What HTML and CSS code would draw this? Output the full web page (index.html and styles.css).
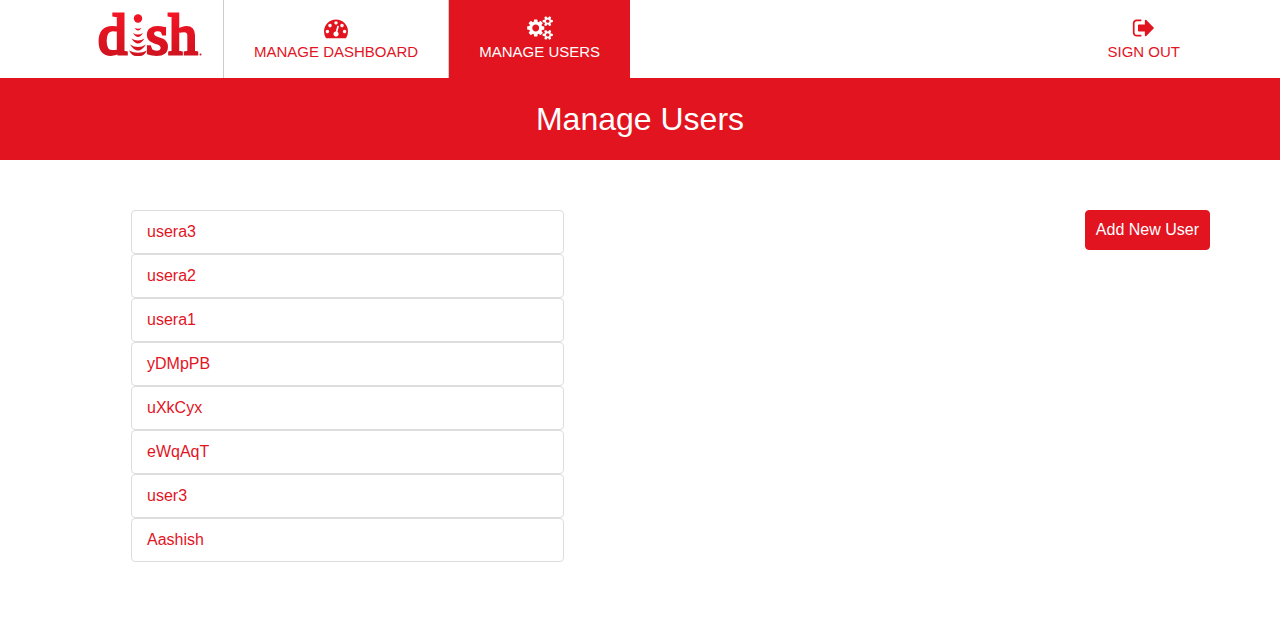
FILE: index.html
```html
<!DOCTYPE html>
<html lang="en">
<head>
<meta charset="utf-8">
<title>Manage Users</title>
<link rel="stylesheet" href="styles.css">
</head>
<body>
<header class="topbar">
  <a class="logo" href="#" aria-label="dish home">
    <svg class="logo-mark" viewBox="0 0 110 78" width="110" height="78">
      <defs>
        <linearGradient id="shade" gradientUnits="userSpaceOnUse" x1="0" y1="14" x2="0" y2="56">
          <stop offset="0" stop-color="#f31424"/>
          <stop offset="1" stop-color="#d01320"/>
        </linearGradient>
      </defs>
      <g fill="url(#shade)">
        <text class="logo-text" stroke="url(#shade)" x="1" y="54">d</text>
        <text class="logo-text" stroke="url(#shade)" x="49" y="54">sh</text>
        <circle cx="41" cy="18.500" r="4.200"/>
        <path d="M37.500 28q3.500 1.500 7 0q-3.500 5-7 0z"/>
        <path d="M36 33q5 3 10 0q-5 8-10 0z"/>
        <path d="M34.500 38.500q6.500 4 13 0q-6.500 10-13 0z"/>
        <path d="M33 44.500q8 5 16 0q-8 12-16 0z"/>
        <path d="M32 50.500q9 4.500 18 0q-3 5.500-7 5.500h-4q-4 0-7-5.500z"/>
        <circle cx="103.500" cy="54.500" r="1"/>
      </g>
    </svg>
  </a>
  <nav class="nav">
    <a class="nav-item" href="#">
      <svg class="icon" viewBox="0 0 1792 1792" width="24" height="24"><path d="M384 1152q0-53-37.500-90.500t-90.500-37.500-90.500 37.500-37.500 90.500 37.500 90.500 90.500 37.500 90.500-37.500 37.500-90.500zm192-448q0-53-37.500-90.500t-90.500-37.500-90.500 37.500-37.500 90.500 37.500 90.500 90.500 37.500 90.500-37.500 37.500-90.500zm428 481l101-382q6-26-7.500-48.500t-38.500-29.500-48 6.500-30 39.500l-101 382q-60 5-107 43.500t-63 98.500q-20 77 20 146t117 89 146-20 89-117q16-60-6-117t-72-91zm660-33q0-53-37.500-90.500t-90.500-37.500-90.500 37.500-37.500 90.500 37.500 90.500 90.500 37.500 90.500-37.500 37.500-90.500zm-640-640q0-53-37.500-90.500t-90.500-37.500-90.500 37.500-37.500 90.500 37.500 90.500 90.500 37.500 90.500-37.500 37.500-90.500zm448 192q0-53-37.500-90.500t-90.500-37.500-90.500 37.500-37.500 90.500 37.500 90.500 90.500 37.500 90.500-37.500 37.500-90.500zm320 448q0 261-141 483-19 29-54 29h-1402q-35 0-54-29-141-221-141-483 0-182 71-348t191-286 286-191 348-71 348 71 286 191 191 286 71 348z"/></svg>
      <span>MANAGE DASHBOARD</span>
    </a>
    <a class="nav-item nav-item-active" href="#" aria-current="page">
      <svg class="icon" viewBox="-64 0 1920 1792" width="26" height="24"><path d="M832 896q0-106-75-181t-181-75-181 75-75 181 75 181 181 75 181-75 75-181zm768 512q0-52-38-90t-90-38-90 38-38 90q0 53 37.500 90.500t90.500 37.500 90.500-37.500 37.500-90.500zm0-1024q0-52-38-90t-90-38-90 38-38 90q0 53 37.500 90.500t90.500 37.500 90.500-37.500 37.500-90.500zm-384 421v185q0 10-7 19.500t-16 10.500l-155 24q-11 35-32 76 34 48 90 115 7 11 7 20 0 12-7 19-23 30-82.500 89.500t-78.500 59.500q-11 0-21-7l-115-90q-37 19-77 31-11 108-23 155-7 24-30 24h-186q-11 0-20-7.500t-10-17.500l-23-153q-34-10-75-31l-118 89q-7 7-20 7-11 0-21-8-144-133-144-160 0-9 7-19 10-14 41-53t47-61q-23-44-35-82l-152-24q-10-1-17-9.500t-7-19.500v-185q0-10 7-19.500t16-10.500l155-24q11-35 32-76-34-48-90-115-7-11-7-20 0-12 7-20 22-30 82-89t79-59q11 0 21 7l115 90q34-18 77-32 11-108 23-154 7-24 30-24h186q11 0 20 7.500t10 17.500l23 153q34 10 75 31l118-89q8-7 20-7 11 0 21 8 144 133 144 160 0 8-7 19-12 16-42 54t-45 60q23 48 34 82l152 23q10 2 17 10.500t7 19.500zm640 533v140q0 16-149 31-12 27-30 52 51 113 51 138 0 4-4 7-122 71-124 71-8 0-46-47t-52-68q-20 2-30 2t-30-2q-14 21-52 68t-46 47q-2 0-124-71-4-3-4-7 0-25 51-138-18-25-30-52-149-15-149-31v-140q0-16 149-31 13-29 30-52-51-113-51-138 0-4 4-7 4-2 35-20t59-34 30-16q8 0 46 46.500t52 67.500q20-2 30-2t30 2q51-71 92-112l6-2q4 0 124 70 4 3 4 7 0 25-51 138 17 23 30 52 149 15 149 31zm0-1024v140q0 16-149 31-12 27-30 52 51 113 51 138 0 4-4 7-122 71-124 71-8 0-46-47t-52-68q-20 2-30 2t-30-2q-14 21-52 68t-46 47q-2 0-124-71-4-3-4-7 0-25 51-138-18-25-30-52-149-15-149-31v-140q0-16 149-31 13-29 30-52-51-113-51-138 0-4 4-7 4-2 35-20t59-34 30-16q8 0 46 46.500t52 67.500q20-2 30-2t30 2q51-71 92-112l6-2q4 0 124 70 4 3 4 7 0 25-51 138 17 23 30 52 149 15 149 31z"/></svg>
      <span>MANAGE USERS</span>
    </a>
  </nav>
  <a class="nav-item sign-out" href="#">
    <svg class="icon" viewBox="0 0 1792 1792" width="24" height="24"><path d="M704 1440q0 4 1 20t.5 26.500-3 23.500-10 19.500-20.500 6.500h-320q-119 0-203.500-84.500t-84.500-203.500v-704q0-119 84.500-203.500t203.500-84.500h320q13 0 22.500 9.500t9.500 22.500q0 4 1 20t.5 26.500-3 23.500-10 19.500-20.500 6.500h-320q-66 0-113 47t-47 113v704q0 66 47 113t113 47h312l11.500 1 11.500 3 8 5.500 7 9 2 13.500zm928-544q0 26-19 45l-544 544q-19 19-45 19t-45-19-19-45v-288h-448q-26 0-45-19t-19-45v-384q0-26 19-45t45-19h448v-288q0-26 19-45t45-19 45 19l544 544q19 19 19 45z"/></svg>
    <span>SIGN OUT</span>
  </a>
</header>
<div class="banner"><h1 class="banner-title">Manage Users</h1></div>
<main class="content">
  <ul class="user-list">
    <li><a class="user" href="#">usera3</a></li>
    <li><a class="user" href="#">usera2</a></li>
    <li><a class="user" href="#">usera1</a></li>
    <li><a class="user" href="#">yDMpPB</a></li>
    <li><a class="user" href="#">uXkCyx</a></li>
    <li><a class="user" href="#">eWqAqT</a></li>
    <li><a class="user" href="#">user3</a></li>
    <li><a class="user" href="#">Aashish</a></li>
  </ul>
  <button class="add-user" type="button">Add New User</button>
</main>
</body>
</html>
```
FILE: styles.css
```css
* {
  box-sizing: border-box;
}

body {
  margin: 0;
  background: #fff;
  color: #e2141f;
  font-family: "Liberation Sans", Arial, sans-serif;
  font-size: 16px;
  line-height: 22px;
}

a {
  color: inherit;
  text-decoration: none;
}

.topbar {
  display: flex;
  align-items: stretch;
  padding-right: 70px;
}

.logo {
  padding: 0 16px 0 97px;
  border-right: 1px solid #ccc;
}

.logo-mark {
  display: block;
}

.logo-text {
  font-family: "Liberation Serif", "Times New Roman", serif;
  font-size: 58px;
  stroke-width: 3px;
}

.nav {
  display: flex;
}

.nav-item {
  display: flex;
  flex-direction: column;
  align-items: center;
  gap: 2px;
  padding: 16px 30px;
  border-right: 1px solid #ccc;
  font-size: 15px;
  line-height: 20px;
}

.nav-item-active {
  border-right: 0;
  background: #e2141f;
  color: #fff;
}

.sign-out {
  margin-left: auto;
  border-right: 0;
}

.icon {
  fill: currentColor;
}

.banner {
  padding: 20px;
  background: #e2141f;
  color: #fff;
  text-align: center;
}

.banner-title {
  margin: 0;
  font-size: 32px;
  font-weight: 400;
  line-height: 42px;
}

.content {
  display: flex;
  align-items: flex-start;
  justify-content: space-between;
  padding: 50px 70px;
}

.user-list {
  width: 38%;
  margin: 0 0 0 61px;
  padding: 0;
  list-style: none;
}

.user {
  display: block;
  padding: 10px 15px;
  border: 1px solid #ddd;
  border-radius: 4px;
}

.add-user {
  padding: 8px 10px;
  border: 1px solid #e2141f;
  border-radius: 4px;
  background: #e2141f;
  color: #fff;
  font: inherit;
}
```
